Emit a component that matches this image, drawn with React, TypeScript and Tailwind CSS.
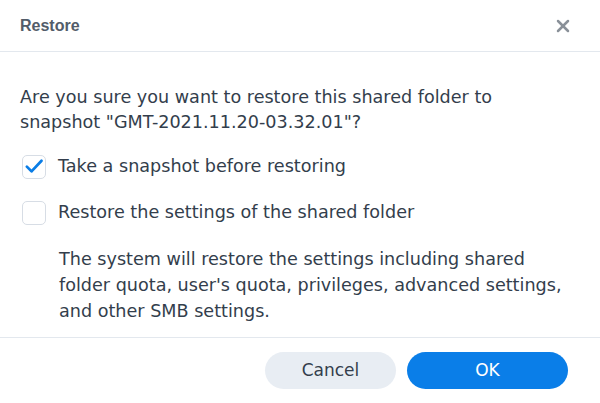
import { X } from 'lucide-react';

function Tick() {
  return (
    <svg viewBox="0 0 24 24" className="w-[24px] h-[24px]" fill="none">
      <path
        d="M4.2 11.6 L9.3 16.8 L20.2 5.2"
        stroke="#0a7de6"
        strokeWidth="3"
        strokeLinecap="round"
        strokeLinejoin="round"
      />
    </svg>
  );
}

export default function App() {
  return (
    <div
      className="w-[600px] h-[403px] bg-white flex flex-col text-[#333e4c]"
      style={{ fontFamily: '"DejaVu Sans", Verdana, sans-serif' }}
    >
      {/* Header */}
      <div className="h-[52px] flex items-center justify-between px-5 border-b border-[#e3e8ee] shrink-0">
        <div
          className="text-[16px] font-bold text-[#525c69] pt-[1px]"
          style={{ fontFamily: '"Liberation Sans", Arial, sans-serif' }}
        >
          Restore
        </div>
        <button className="text-[#8a9199] mr-[7px]">
          <X className="w-[20px] h-[20px]" strokeWidth={3} />
        </button>
      </div>

      {/* Body */}
      <div className="flex-1 px-5 pt-[33px]">
        <p className="text-[17.6px] leading-[25px]">
          Are you sure you want to restore this shared folder to
          <br />
          snapshot "GMT-2021.11.20-03.32.01"?
        </p>

        <div className="mt-[19px] flex items-center gap-[12px] pl-[2px]">
          <div className="w-[24px] h-[24px] rounded-[5px] border border-[#d7dde5] flex items-center justify-center overflow-hidden">
            <Tick />
          </div>
          <span className="text-[17.6px] leading-[25px]">Take a snapshot before restoring</span>
        </div>

        <div className="mt-[21px] flex items-center gap-[12px] pl-[2px]">
          <div className="w-[24px] h-[24px] rounded-[5px] border border-[#d7dde5]" />
          <span className="text-[17.6px] leading-[25px]">Restore the settings of the shared folder</span>
        </div>

        <p className="mt-[21px] pl-[39px] text-[17.6px] leading-[26px]">
          The system will restore the settings including shared
          <br />
          folder quota, user's quota, privileges, advanced settings,
          <br />
          and other SMB settings.
        </p>
      </div>

      {/* Footer */}
      <div className="h-[66px] border-t border-[#e3e8ee] flex items-start justify-end gap-[11px] pt-[14px] pr-[32px] shrink-0">
        <button className="w-[131px] h-[37px] rounded-full bg-[#e8edf3] text-[17px] text-[#333e4c]">
          Cancel
        </button>
        <button className="w-[161px] h-[37px] rounded-full bg-[#0a7ee8] text-[17px] text-white">
          OK
        </button>
      </div>
    </div>
  );
}
